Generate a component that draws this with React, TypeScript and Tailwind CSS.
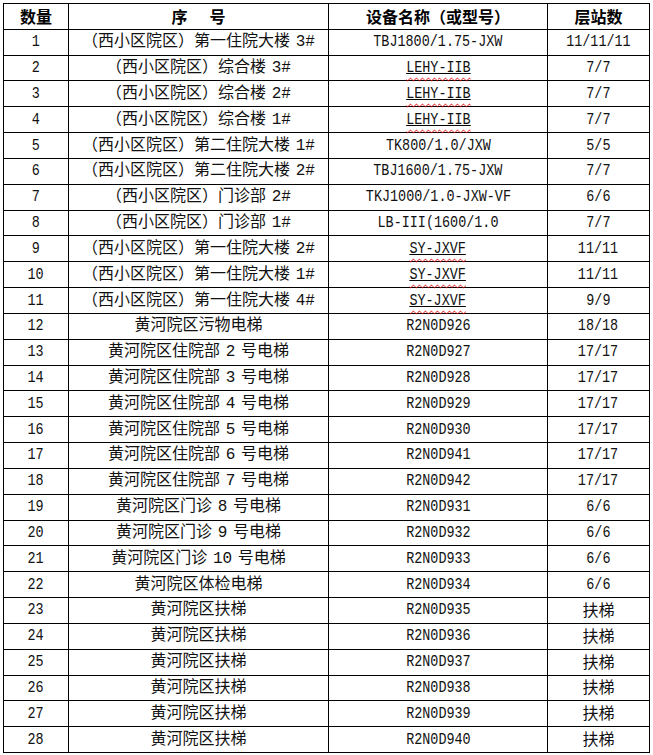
import React from "react";

const rows: [string, string, string][] = [
  ["（西小区院区）第一住院大楼 3#", "TBJ1800/1.75-JXW", "11/11/11"],
  ["（西小区院区）综合楼 3#", "LEHY-IIB", "7/7"],
  ["（西小区院区）综合楼 2#", "LEHY-IIB", "7/7"],
  ["（西小区院区）综合楼 1#", "LEHY-IIB", "7/7"],
  ["（西小区院区）第二住院大楼 1#", "TK800/1.0/JXW", "5/5"],
  ["（西小区院区）第二住院大楼 2#", "TBJ1600/1.75-JXW", "7/7"],
  ["（西小区院区）门诊部 2#", "TKJ1000/1.0-JXW-VF", "6/6"],
  ["（西小区院区）门诊部 1#", "LB-III(1600/1.0", "7/7"],
  ["（西小区院区）第一住院大楼 2#", "SY-JXVF", "11/11"],
  ["（西小区院区）第一住院大楼 1#", "SY-JXVF", "11/11"],
  ["（西小区院区）第一住院大楼 4#", "SY-JXVF", "9/9"],
  ["黄河院区污物电梯", "R2N0D926", "18/18"],
  ["黄河院区住院部 2 号电梯", "R2N0D927", "17/17"],
  ["黄河院区住院部 3 号电梯", "R2N0D928", "17/17"],
  ["黄河院区住院部 4 号电梯", "R2N0D929", "17/17"],
  ["黄河院区住院部 5 号电梯", "R2N0D930", "17/17"],
  ["黄河院区住院部 6 号电梯", "R2N0D941", "17/17"],
  ["黄河院区住院部 7 号电梯", "R2N0D942", "17/17"],
  ["黄河院区门诊 8 号电梯", "R2N0D931", "6/6"],
  ["黄河院区门诊 9 号电梯", "R2N0D932", "6/6"],
  ["黄河院区门诊 10 号电梯", "R2N0D933", "6/6"],
  ["黄河院区体检电梯", "R2N0D934", "6/6"],
  ["黄河院区扶梯", "R2N0D935", "扶梯"],
  ["黄河院区扶梯", "R2N0D936", "扶梯"],
  ["黄河院区扶梯", "R2N0D937", "扶梯"],
  ["黄河院区扶梯", "R2N0D938", "扶梯"],
  ["黄河院区扶梯", "R2N0D939", "扶梯"],
  ["黄河院区扶梯", "R2N0D940", "扶梯"],
];

const flagged = ["LEHY-IIB", "SY-JXVF"];

function Latin({ text }: { text: string }) {
  if (flagged.includes(text)) {
    return (
      <span className="inline-block scale-x-[0.84]">
        <span className="underline decoration-wavy decoration-[#e00000] decoration-1 underline-offset-[5px]">
          <span className="underline decoration-black decoration-1 underline-offset-[1px]">{text}</span>
        </span>
      </span>
    );
  }
  return <span className="inline-block scale-x-[0.84]">{text}</span>;
}

const td = "border border-black text-center align-middle p-0";

export default function App() {
  return (
    <div className="bg-white w-[653px] h-[755px] pt-[3px] pl-[3px] text-[#111] text-base leading-none font-['Liberation_Mono','Noto_Sans_CJK_SC',monospace]">
      <table className="border-collapse table-fixed w-[646px]">
        <colgroup>
          <col className="w-[65px]" />
          <col className="w-[260px]" />
          <col className="w-[219px]" />
          <col className="w-[102px]" />
        </colgroup>
        <thead>
          <tr className="h-[25.83px] font-bold text-black font-['Noto_Sans_CJK_SC',sans-serif]">
            <th className={td}>数量</th>
            <th className={td}>
              序<span className="inline-block w-[22px]" />号
            </th>
            <th className={td}>设备名称（或型号）</th>
            <th className={td}>层站数</th>
          </tr>
        </thead>
        <tbody>
          {rows.map(([name, model, stops], i) => (
            <tr key={i} className="h-[25.83px]">
              <td className={td}>
                <Latin text={String(i + 1)} />
              </td>
              <td className={`${td} [word-spacing:-4px]`}>{name}</td>
              <td className={td}>
                <Latin text={model} />
              </td>
              <td className={td}>
                {stops === "扶梯" ? <span className="font-['Noto_Sans_CJK_SC',sans-serif]">扶梯</span> : <Latin text={stops} />}
              </td>
            </tr>
          ))}
        </tbody>
      </table>
    </div>
  );
}
